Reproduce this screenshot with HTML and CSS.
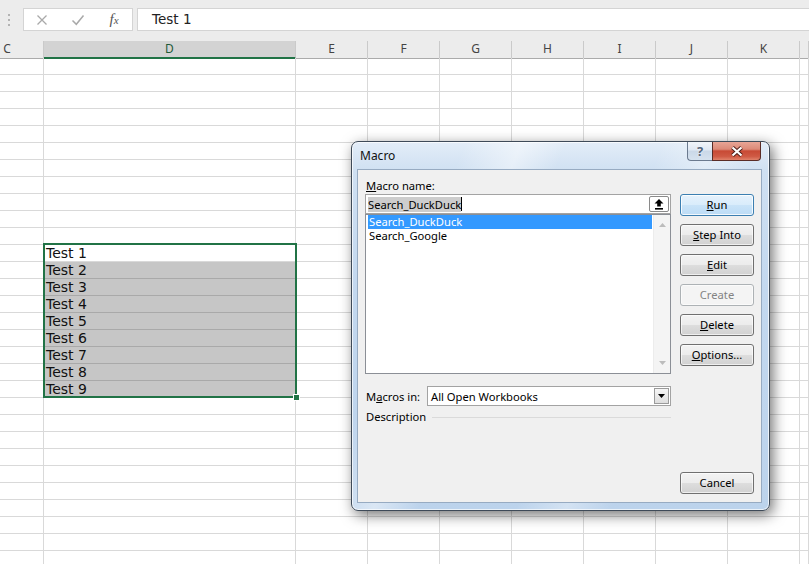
FILE: index.html
```html
<!DOCTYPE html>
<html>
<head>
<meta charset="utf-8">
<title>Macro</title>
<link rel="stylesheet" href="styles.css">
</head>
<body>
<div class="app">
  <div class="fbar">
    <div class="grip"><span></span><span></span><span></span></div>
    <div class="fxtools">
      <div class="slot"><svg width="12" height="12" viewBox="0 0 12 12"><path d="M1.5 1.5l9 9M10.5 1.5l-9 9" stroke="#a9a9a9" stroke-width="1.3" fill="none"/></svg></div>
      <div class="slot"><svg width="14" height="12" viewBox="0 0 14 12"><path d="M1.5 6.5l3.8 3.8L12.5 1.5" stroke="#a9a9a9" stroke-width="1.5" fill="none"/></svg></div>
      <div class="slot"><span class="fx">f<span class="fxx">x</span></span></div>
    </div>
    <div class="fxinput">Test 1</div>
  </div>

  <div class="colhead">
    <span>C</span><span class="hsel">D</span><span>E</span><span>F</span><span>G</span><span>H</span><span>I</span><span>J</span><span>K</span><span></span>
  </div>

  <div class="sheet">
    <div class="row"><span></span><span></span><span></span><span></span><span></span><span></span><span></span><span></span><span></span><span></span></div>
    <div class="row"><span></span><span></span><span></span><span></span><span></span><span></span><span></span><span></span><span></span><span></span></div>
    <div class="row"><span></span><span></span><span></span><span></span><span></span><span></span><span></span><span></span><span></span><span></span></div>
    <div class="row"><span></span><span></span><span></span><span></span><span></span><span></span><span></span><span></span><span></span><span></span></div>
    <div class="row"><span></span><span></span><span></span><span></span><span></span><span></span><span></span><span></span><span></span><span></span></div>
    <div class="row"><span></span><span></span><span></span><span></span><span></span><span></span><span></span><span></span><span></span><span></span></div>
    <div class="row"><span></span><span></span><span></span><span></span><span></span><span></span><span></span><span></span><span></span><span></span></div>
    <div class="row"><span></span><span></span><span></span><span></span><span></span><span></span><span></span><span></span><span></span><span></span></div>
    <div class="row"><span></span><span></span><span></span><span></span><span></span><span></span><span></span><span></span><span></span><span></span></div>
    <div class="row"><span></span><span></span><span></span><span></span><span></span><span></span><span></span><span></span><span></span><span></span></div>
    <div class="row"><span></span><span></span><span></span><span></span><span></span><span></span><span></span><span></span><span></span><span></span></div>
    <div class="row"><span></span><span class="txt">Test 1</span><span></span><span></span><span></span><span></span><span></span><span></span><span></span><span></span></div>
    <div class="row"><span></span><span class="txt g">Test 2</span><span></span><span></span><span></span><span></span><span></span><span></span><span></span><span></span></div>
    <div class="row"><span></span><span class="txt g">Test 3</span><span></span><span></span><span></span><span></span><span></span><span></span><span></span><span></span></div>
    <div class="row"><span></span><span class="txt g">Test 4</span><span></span><span></span><span></span><span></span><span></span><span></span><span></span><span></span></div>
    <div class="row"><span></span><span class="txt g">Test 5</span><span></span><span></span><span></span><span></span><span></span><span></span><span></span><span></span></div>
    <div class="row"><span></span><span class="txt g">Test 6</span><span></span><span></span><span></span><span></span><span></span><span></span><span></span><span></span></div>
    <div class="row"><span></span><span class="txt g">Test 7</span><span></span><span></span><span></span><span></span><span></span><span></span><span></span><span></span></div>
    <div class="row"><span></span><span class="txt g">Test 8</span><span></span><span></span><span></span><span></span><span></span><span></span><span></span><span></span></div>
    <div class="row"><span></span><span class="txt g">Test 9</span><span></span><span></span><span></span><span></span><span></span><span></span><span></span><span></span></div>
    <div class="row"><span></span><span></span><span></span><span></span><span></span><span></span><span></span><span></span><span></span><span></span></div>
    <div class="row"><span></span><span></span><span></span><span></span><span></span><span></span><span></span><span></span><span></span><span></span></div>
    <div class="row"><span></span><span></span><span></span><span></span><span></span><span></span><span></span><span></span><span></span><span></span></div>
    <div class="row"><span></span><span></span><span></span><span></span><span></span><span></span><span></span><span></span><span></span><span></span></div>
    <div class="row"><span></span><span></span><span></span><span></span><span></span><span></span><span></span><span></span><span></span><span></span></div>
    <div class="row"><span></span><span></span><span></span><span></span><span></span><span></span><span></span><span></span><span></span><span></span></div>
    <div class="row"><span></span><span></span><span></span><span></span><span></span><span></span><span></span><span></span><span></span><span></span></div>
    <div class="row"><span></span><span></span><span></span><span></span><span></span><span></span><span></span><span></span><span></span><span></span></div>
    <div class="row"><span></span><span></span><span></span><span></span><span></span><span></span><span></span><span></span><span></span><span></span></div>
    <div class="row"><span></span><span></span><span></span><span></span><span></span><span></span><span></span><span></span><span></span><span></span></div>
  </div>

  <div class="selbox"><span class="handle"></span></div>

  <div class="dialog">
    <div class="titlebar">
      <span class="title">Macro</span>
      <div class="capbtns">
        <div class="cap help">?</div>
        <div class="cap close"><svg width="14" height="11" viewBox="0 0 14 11"><path d="M2.5 1.5l9 8M11.5 1.5l-9 8" stroke="#4a1c16" stroke-width="4" fill="none"/><path d="M2.5 1.5l9 8M11.5 1.5l-9 8" stroke="#fff" stroke-width="2.2" fill="none"/></svg></div>
      </div>
    </div>
    <div class="client">
      <div class="leftcol">
        <div class="lbl"><u>M</u>acro name:</div>
        <div class="namebox">
          <span class="seltext">Search_DuckDuck</span><span class="caret"></span>
          <span class="upbtn"><svg width="10" height="12" viewBox="0 0 10 12"><path d="M5 1L9.5 5.5H6.8V8.5H3.2V5.5H0.5Z" fill="#000"/><rect x="1" y="10" width="8" height="1.6" fill="#000"/></svg></span>
        </div>
        <div class="list">
          <div class="items">
            <div class="item on">Search_DuckDuck</div>
            <div class="item">Search_Google</div>
          </div>
          <div class="vscroll">
            <svg width="7" height="4" viewBox="0 0 7 4"><path d="M0 4L3.5 0L7 4Z" fill="#bcbcbc"/></svg>
            <svg width="7" height="4" viewBox="0 0 7 4"><path d="M0 0L3.5 4L7 0Z" fill="#bcbcbc"/></svg>
          </div>
        </div>
        <div class="inrow">
          <span class="lbl2">M<u>a</u>cros in:</span>
          <div class="combo">
            <span>All Open Workbooks</span>
            <span class="ddbtn"><svg width="7" height="4" viewBox="0 0 7 4"><path d="M0 0L3.5 4L7 0Z" fill="#000"/></svg></span>
          </div>
        </div>
        <div class="desc"><span>Description</span><span class="rule"></span></div>
      </div>
      <div class="rightcol">
        <div class="btn def"><u>R</u>un</div>
        <div class="btn"><u>S</u>tep Into</div>
        <div class="btn"><u>E</u>dit</div>
        <div class="btn dis">Create</div>
        <div class="btn"><u>D</u>elete</div>
        <div class="btn"><u>O</u>ptions...</div>
        <div class="btn cancel">Cancel</div>
      </div>
    </div>
  </div>
</div>
</body>
</html>
```

FILE: styles.css
```css
* { box-sizing: border-box; margin: 0; padding: 0; }
html, body { width: 809px; height: 564px; overflow: hidden; background: #fff; }
body { font-family: "DejaVu Sans", sans-serif; }

.app { position: relative; width: 809px; height: 564px; overflow: hidden; }

/* formula bar */
.fbar { display: flex; align-items: flex-start; height: 41px; padding-top: 8px; background: #ececec; }
.grip { width: 17px; height: 23px; margin-right: 6px; display: flex; flex-direction: column; align-items: center; gap: 3px; padding-top: 6px; }
.grip span { width: 2px; height: 2px; background: #b3b3b3; }
.fxtools { width: 110px; height: 23px; background: #fff; border: 1px solid #d4d4d4; display: flex; align-items: center; }
.slot { width: 36px; display: flex; justify-content: center; align-items: center; }
.fx { font-family: "Liberation Serif", serif; font-style: italic; color: #555; font-size: 15px; line-height: 15px; }
.fxx { font-size: 11px; }
.fxinput { flex: 1; margin-left: 4px; height: 23px; background: #fff; border: 1px solid #d4d4d4; border-right: 0; padding-left: 14px; font-size: 13.5px; line-height: 21px; color: #222; }

/* column header */
.colhead { display: grid; grid-template-columns: 73px 252px repeat(7, 72px) 1fr; height: 17px; margin-left: -29px; background: #ececec; font-family: "Noto Sans", sans-serif; font-size: 12px; color: #444; }
.colhead span { border-right: 1px solid #cacaca; border-bottom: 1px solid #ababab; text-align: center; line-height: 16px; }
.colhead .hsel { background: #d3d3d3; border-bottom: 2px solid #217346; color: #1f5a38; }

/* sheet */
.sheet { margin-left: -29px; }
.row { display: grid; grid-template-columns: 73px 252px repeat(7, 72px) 1fr; height: 17px; }
.row span { border-right: 1px solid #d9d9d9; border-bottom: 1px solid #d9d9d9; }
.row .txt { font-size: 14px; line-height: 16px; padding-left: 2px; color: #111; white-space: nowrap; }
.row .g { background: #c6c6c6; border-bottom-color: #a9a9a9; }

.selbox { position: absolute; left: 43px; top: 243px; width: 254px; height: 155px; border: 2px solid #217346; }
.handle { position: absolute; right: -5px; bottom: -5px; width: 7px; height: 7px; background: #217346; border: 1px solid #fff; }

/* dialog */
.dialog {
  position: absolute; left: 351px; top: 141px; width: 419px; height: 370px;
  border: 1px solid #3e4a58; border-radius: 7px;
  padding: 0 7px 7px 5px;
  display: flex; flex-direction: column;
  font-family: "Noto Sans", sans-serif; font-size: 11.2px; color: #000;
  background:
    linear-gradient(112deg, rgba(255,255,255,0) 20%, rgba(255,255,255,.45) 30%, rgba(255,255,255,0) 38%, rgba(255,255,255,0) 55%, rgba(255,255,255,.35) 64%, rgba(255,255,255,0) 72%),
    linear-gradient(180deg, #e3edf8 0%, #cfe0f2 8%, #c3d8ef 40%, #bcd3ec 100%);
  box-shadow: 3px 4px 14px rgba(0,0,0,.55), inset 0 0 0 1px rgba(255,255,255,.7);
}
.titlebar { height: 27px; display: flex; align-items: flex-start; padding-left: 3px; }
.title { margin-top: 6px; line-height: 16px; font-size: 12px; color: #111; }
.capbtns { margin-left: auto; margin-right: 1px; display: flex; }
.cap { height: 19px; display: flex; align-items: center; justify-content: center; }
.help {
  width: 25px; border: 1px solid #6b7a8f; border-top: 0; border-right: 0; border-radius: 0 0 0 4px;
  background: linear-gradient(180deg, #f1f5fa 0%, #dfe8f3 45%, #cad8e8 50%, #d6e2ef 100%);
  color: #56667c; font-size: 13px; font-weight: bold; line-height: 17px;
  text-shadow: 0 0 2px #fff;
}
.close {
  width: 49px; border: 1px solid #5a2c26; border-top: 0; border-radius: 0 0 4px 0;
  background: linear-gradient(180deg, #e8a596 0%, #dc8a78 40%, #c84a35 50%, #cf5a44 80%, #e0826a 100%);
}

.client { flex: 1; display: flex; background: #f0f0f0; border: 1px solid #97abc2; padding: 8px 7px 8px 7px; }
.leftcol { width: 306px; display: flex; flex-direction: column; }
.lbl { line-height: 16px; padding-left: 1px; }
.namebox { height: 20px; border: 1px solid #a3a3a3; background: #fff; display: flex; align-items: center; padding-left: 2px; }
.seltext { background: #cdcdcd; line-height: 15px; }
.caret { width: 1px; height: 14px; background: #000; }
.upbtn { margin-left: auto; margin-right: 1px; width: 20px; height: 16px; border: 1px solid #8a8a8a; border-radius: 2px; background: #fff; display: flex; align-items: center; justify-content: center; }

.list { height: 160px; border: 1px solid #8b8f96; background: #fff; display: flex; }
.items { flex: 1; padding: 0 1px 0 2px; }
.item { height: 14px; line-height: 14px; padding-left: 1px; white-space: nowrap; }
.item.on { background: #3399ff; color: #fff; }
.vscroll { width: 17px; background: #f4f4f4; border-left: 1px solid #ececec; display: flex; flex-direction: column; align-items: center; justify-content: space-between; padding: 8px 0 8px; }

.inrow { margin-top: 12px; display: flex; align-items: center; }
.lbl2 { width: 62px; padding-left: 1px; }
.combo { width: 244px; height: 20px; border: 1px solid #a3a3a3; background: #fff; display: flex; align-items: center; padding-left: 3px; }
.ddbtn { margin-left: auto; margin-right: 1px; width: 15px; height: 16px; border: 1px solid #9a9a9a; background: linear-gradient(#f6f6f6, #dedede); display: flex; align-items: center; justify-content: center; }

.desc { margin-top: 3px; display: flex; align-items: center; line-height: 16px; padding-left: 1px; }
.rule { flex: 1; height: 1px; background: #dadada; margin-left: 6px; }

.rightcol { width: 74px; margin-left: 9px; margin-top: 16px; display: flex; flex-direction: column; }
.btn {
  height: 22px; margin-bottom: 8px; border: 1px solid #707070; border-radius: 3px;
  background: linear-gradient(180deg, #f3f3f3 0%, #ececec 48%, #dddddd 52%, #d1d1d1 100%);
  box-shadow: inset 0 0 0 1px rgba(255,255,255,.65);
  text-align: center; line-height: 20px; color: #000;
}
.btn.def { border-color: #3c7fb1; background: linear-gradient(180deg, #e6f2fc 0%, #d9ecfb 48%, #c9e3f8 52%, #bcdcf6 100%); box-shadow: inset 0 0 0 1px rgba(255,255,255,.8); }
.btn.dis { border-color: #adb2b5; color: #838383; background: #f4f4f4; }
.btn.cancel { margin-top: auto; margin-bottom: 0; }
```
